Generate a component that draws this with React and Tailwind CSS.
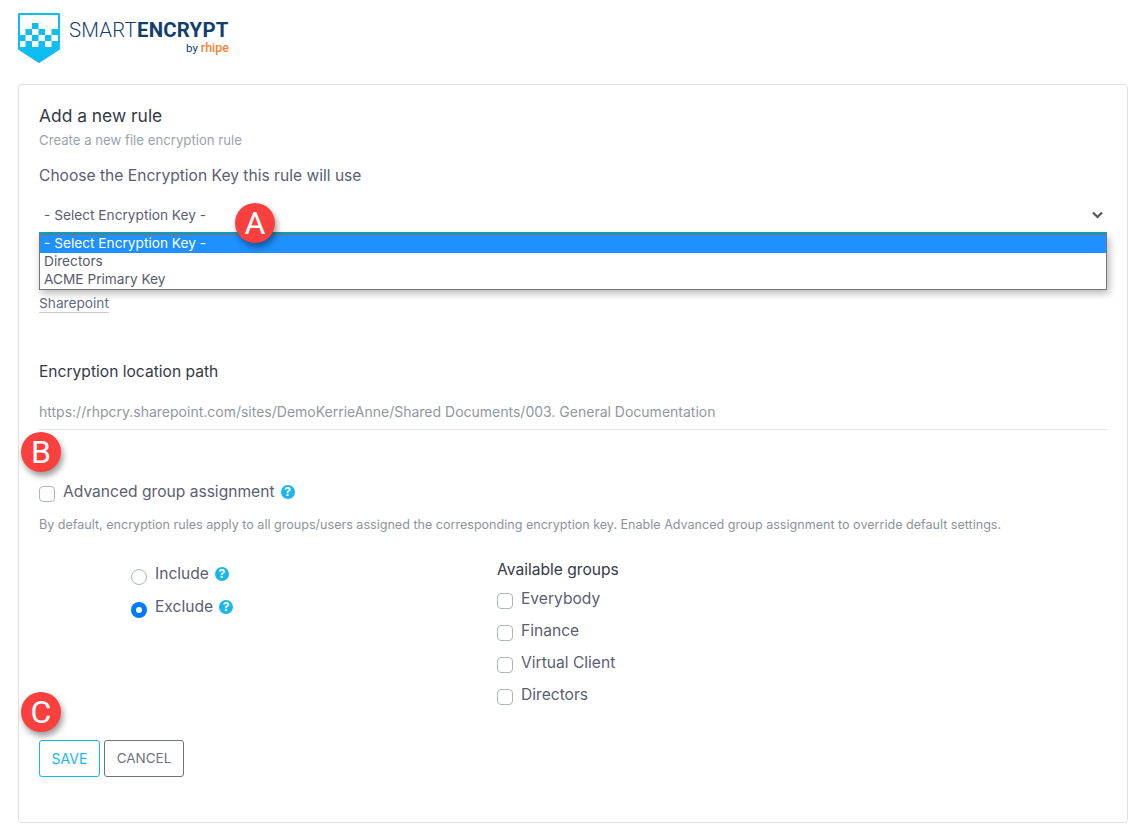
import React from "react";

const Badge = ({ letter, className }) => (
  <div className={`absolute w-10 h-10 rounded-full bg-[#f9403f] text-white flex items-center justify-center text-[32px] leading-none shadow-[2px_4px_6px_rgba(0,0,0,0.4)] font-['Roboto',sans-serif] ${className}`}>
    {letter}
  </div>
);

const Help = () => (
  <span className="inline-flex w-[14px] h-[14px] rounded-full bg-[#1ab7ea] text-white text-[12px] font-bold leading-none items-center justify-center">?</span>
);

const Check = ({ label }) => (
  <label className="flex items-center gap-[8px]">
    <span className="w-4 h-4 mt-[4px] rounded-[4px] border border-[#adb5bd] bg-white shrink-0"></span>
    <span className="text-[15.6px] leading-[22px] text-[#5a6072]">{label}</span>
  </label>
);

const cells = [
  [14, 10],
  [7.5, 16], [20.5, 16], [33.5, 16],
  [1, 22], [14, 22], [27, 22],
  [7.5, 28], [20.5, 28], [33.5, 28],
];

const Logo = () => (
  <div className="flex items-start gap-[9px]">
    <svg width="42" height="50" viewBox="0 0 42 50">
      <path d="M1 1H41V36L21 49L1 36Z" fill="#fff" stroke="#0fbdf0" strokeWidth="2" strokeLinejoin="round" />
      <path d="M1 34H41V36L21 49L1 36Z" fill="#0fbdf0" />
      {cells.map(([x, y]) => (
        <rect key={`${x}-${y}`} x={x} y={y} width="6.5" height="6" fill="#0fbdf0" />
      ))}
    </svg>
    <div className="font-['Roboto',sans-serif] mt-[6px] w-[160px]">
      <div className="text-[20.4px] leading-[22px] text-[#123f6d] font-light tracking-[0.2px] whitespace-nowrap">
        SMART<span className="font-bold">ENCRYPT</span>
      </div>
      <div className="text-right text-[11.5px] leading-[14px] text-[#123f6d]">
        by <span className="text-[#f58233] text-[12.5px] font-medium">rhipe</span>
      </div>
    </div>
  </div>
);

export default function App() {
  return (
    <div className="relative w-[1137px] h-[835px] bg-white overflow-hidden font-['Inter','Roboto',sans-serif] text-[#5a6072]">
      <div className="pl-[18px] pt-[13px] h-[84px]">
        <Logo />
      </div>

      <div className="relative ml-[18px] mr-[9px] h-[739px] border border-[#dfe1e5] rounded-[4px] px-[20px] pt-[20px]">
        <h1 className="text-[17.4px] leading-[22px] text-[#343a46]">Add a new rule</h1>
        <p className="text-[13.2px] leading-[18px] mt-[4px] text-[#9aa3ad]">Create a new file encryption rule</p>
        <p className="text-[15.6px] leading-[20px] mt-[17px]">Choose the Encryption Key this rule will use</p>

        <div className="mt-[19px] flex items-center justify-between h-[20px] pl-[5px] pr-[3px] w-[1067px]">
          <span className="text-[13.7px]">- Select Encryption Key -</span>
          <svg width="11" height="8" viewBox="0 0 11 8" fill="none" stroke="#4d5561" strokeWidth="2.2">
            <path d="M1 1.5L5.5 6L10 1.5" />
          </svg>
        </div>

        <div className="mt-[69px] text-[13.7px] leading-[18px] text-[#5f6b85] border-b border-[#c8ccd2] w-fit">Sharepoint</div>

        <p className="text-[15.6px] leading-[20px] mt-[49px] text-[#343a46]">Encryption location path</p>
        <div className="mt-[20px] h-[28px] w-[1068px] border-b border-[#dee2e6] text-[14px] leading-[20px] text-[#9098a1] whitespace-nowrap">
          https://rhpcry.sharepoint.com/sites/DemoKerrieAnne/Shared Documents/003. General Documentation
        </div>

        <div className="mt-[51px]">
          <Check
            label={
              <span className="inline-flex items-center gap-[6px]">
                Advanced group assignment <Help />
              </span>
            }
          />
        </div>
        <p className="mt-[13px] text-[12.57px] leading-[18px] text-[#8b939c] whitespace-nowrap">
          By default, encryption rules apply to all groups/users assigned the corresponding encryption key. Enable Advanced group assignment to override default settings.
        </p>

        <div className="mt-[29px] flex">
          <div className="ml-[92px] w-[366px] flex flex-col gap-[11px]">
            <label className="flex items-center gap-[8px] h-[22px]">
              <span className="w-4 h-4 mt-[5px] rounded-full border border-[#adb5bd] bg-white"></span>
              <span className="flex items-center gap-[6px] text-[15.6px]">Include <Help /></span>
            </label>
            <label className="flex items-center gap-[8px] h-[22px]">
              <span className="w-4 h-4 mt-[5px] rounded-full bg-[#007bff] flex items-center justify-center">
                <span className="w-[6px] h-[6px] rounded-full bg-white"></span>
              </span>
              <span className="flex items-center gap-[6px] text-[15.6px]">Exclude <Help /></span>
            </label>
          </div>
          <div className="flex flex-col">
            <p className="text-[15.6px] leading-[22px] text-[#343a46] -mt-[4px] mb-[7px]">Available groups</p>
            <div className="flex flex-col gap-[10px]">
              <Check label="Everybody" />
              <Check label="Finance" />
              <Check label="Virtual Client" />
              <Check label="Directors" />
            </div>
          </div>
        </div>

        <div className="mt-[34px] flex gap-[4px]">
          <button className="w-[61px] h-[37px] border border-[#14b9ef] rounded-[3px] text-[14px] text-[#14b9ef]">SAVE</button>
          <button className="w-[80px] h-[37px] border border-[#6c757d] rounded-[3px] text-[13.5px] text-[#6c757d]">CANCEL</button>
        </div>
      </div>

      {/* native select popup */}
      <div className="absolute left-[39px] top-[232px] w-[1068px] border-t-2 border-t-[#17a2b8]">
        <div className="border border-[#767676] bg-white shadow-[2px_3px_8px_rgba(0,0,0,0.3)] text-[13.7px] leading-[17px] text-[#555c6b]">
          <div className="h-[18px] pl-[4px] bg-[#1e90ff] text-white">- Select Encryption Key -</div>
          <div className="h-[18px] pl-[4px]">Directors</div>
          <div className="h-[18px] pl-[4px]">ACME Primary Key</div>
        </div>
      </div>

      <Badge letter="A" className="left-[235px] top-[203px]" />
      <Badge letter="B" className="left-[21px] top-[432px]" />
      <Badge letter="C" className="left-[21px] top-[692px]" />
    </div>
  );
}
